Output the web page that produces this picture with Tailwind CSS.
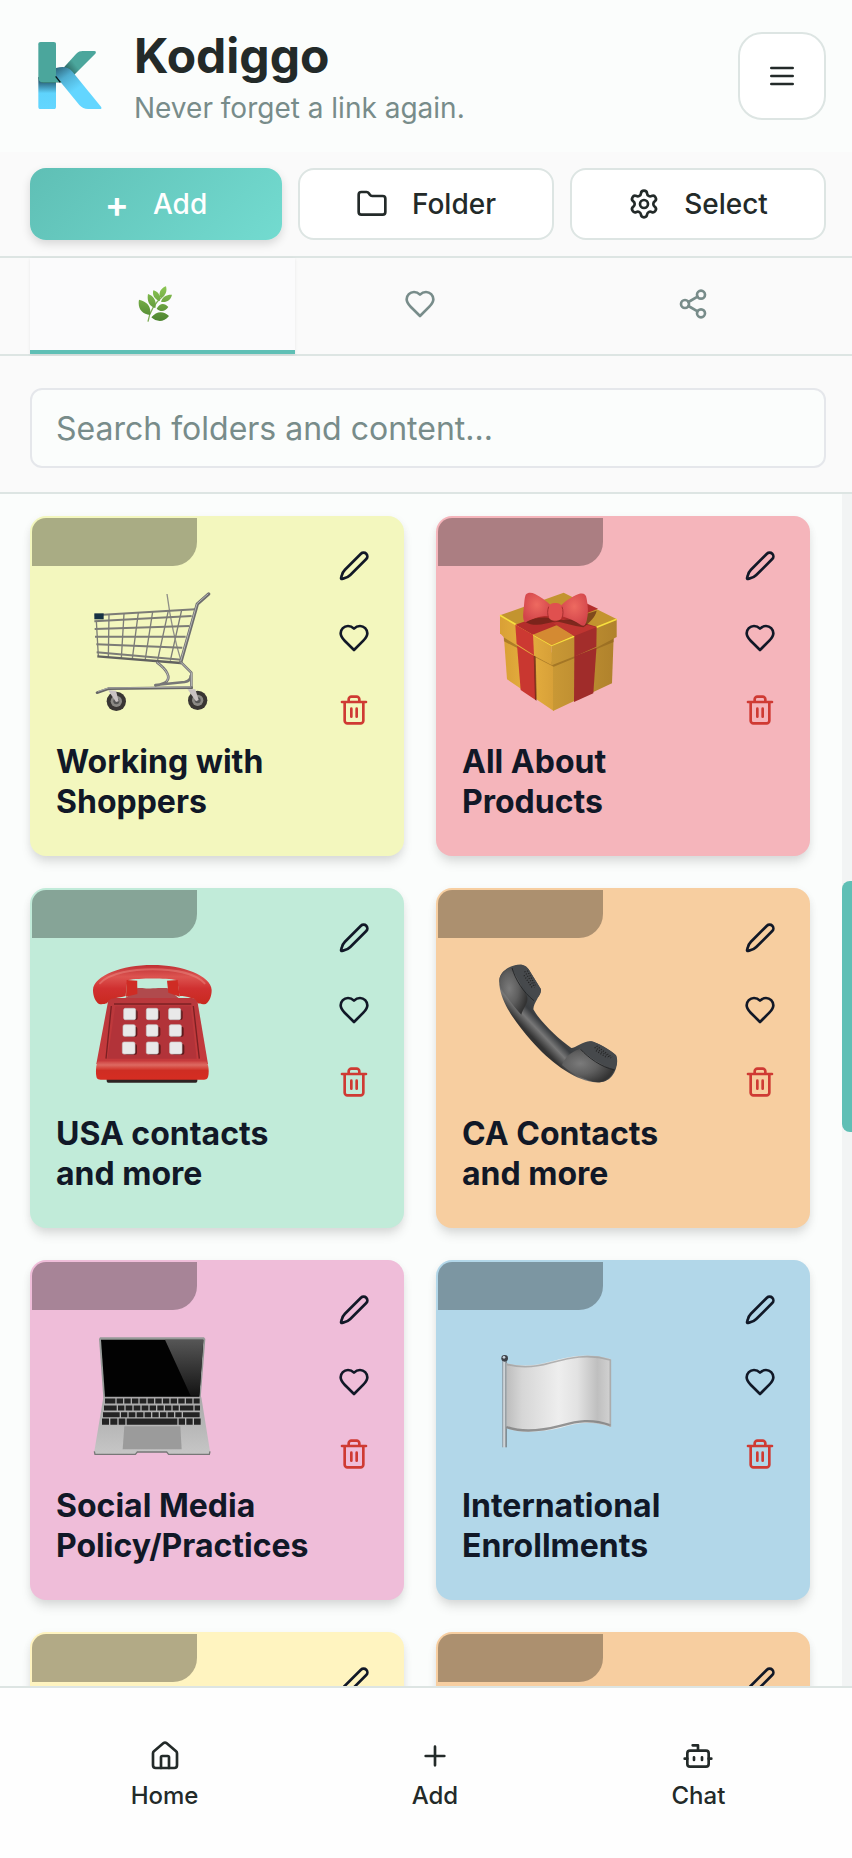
<!DOCTYPE html>
<html lang="en">
<head>
  <meta charset="UTF-8" />
  <meta name="viewport" content="width=device-width, initial-scale=1.0" />
  <title>Kodiggo</title>
  <script src="https://cdn.jsdelivr.net/npm/@tailwindcss/browser@4"></script>
</head>
<body class="flex h-screen flex-col overflow-hidden bg-[#fbfdfc] font-['Inter',sans-serif] text-[#232a29]">

  <!-- Icon sprite -->
  <svg class="absolute size-0" aria-hidden="true">
    <defs>
      <linearGradient id="redTop" x1="0" y1="0" x2="0" y2="1"><stop offset="0" stop-color="#c03034" /><stop offset=".3" stop-color="#dc5450" /><stop offset=".6" stop-color="#d03030" /><stop offset="1" stop-color="#c9291f" /></linearGradient>
      <linearGradient id="redBody" x1="0" y1="0" x2="0" y2="1"><stop offset="0" stop-color="#b9383c" /><stop offset="1" stop-color="#c63a3c" /></linearGradient>
      <linearGradient id="redBase" x1="0" y1="0" x2="0" y2="1"><stop offset="0" stop-color="#cf4644" /><stop offset=".2" stop-color="#dd6a62" /><stop offset=".5" stop-color="#cf2d23" /><stop offset="1" stop-color="#d62d22" /></linearGradient>
      <linearGradient id="tube" gradientUnits="userSpaceOnUse" x1="290" y1="545" x2="400" y2="440"><stop offset="0" stop-color="#2c2c2c" /><stop offset=".42" stop-color="#333" /><stop offset=".6" stop-color="#777" /><stop offset=".75" stop-color="#3a3d40" /><stop offset="1" stop-color="#45494c" /></linearGradient>
      <radialGradient id="ear" cx=".35" cy=".45" r=".65"><stop offset="0" stop-color="#7b7b7b" /><stop offset=".5" stop-color="#5f5f5f" /><stop offset="1" stop-color="#333" /></radialGradient>
      <linearGradient id="cloth" x1="0" y1="0" x2="1" y2="0"><stop offset="0" stop-color="#bdbdbd" /><stop offset=".15" stop-color="#d6d6d6" /><stop offset=".5" stop-color="#eeeeee" /><stop offset=".68" stop-color="#e2e2e2" /><stop offset=".87" stop-color="#bfbfbf" /><stop offset="1" stop-color="#d2d2d2" /></linearGradient>
      <linearGradient id="pole" x1="0" y1="0" x2="1" y2="0"><stop offset="0" stop-color="#7c858c" /><stop offset=".4" stop-color="#e4eaee" /><stop offset="1" stop-color="#5c6368" /></linearGradient>
      <linearGradient id="glare" x1="0" y1="0" x2="0" y2="1"><stop offset="0" stop-color="#565656" /><stop offset="1" stop-color="#141414" /></linearGradient>
      <linearGradient id="palm" x1="0" y1="0" x2="0" y2="1"><stop offset="0" stop-color="#a9a9a9" /><stop offset="1" stop-color="#c6c6c6" /></linearGradient>
      <linearGradient id="gold" x1="0" y1="0" x2="1" y2="0"><stop offset="0" stop-color="#d9a035" /><stop offset=".5" stop-color="#e6af3f" /><stop offset="1" stop-color="#d7a038" /></linearGradient>
      <linearGradient id="goldDark" x1="0" y1="0" x2="1" y2="0"><stop offset="0" stop-color="#c99835" /><stop offset="1" stop-color="#b0822c" /></linearGradient>
      <radialGradient id="bow" cx=".5" cy=".4" r=".6"><stop offset="0" stop-color="#ee6a60" /><stop offset="1" stop-color="#d2444a" /></radialGradient>
      <linearGradient id="leaf" x1="0" y1="0" x2="0" y2="1"><stop offset="0" stop-color="#8cc653" /><stop offset="1" stop-color="#4e8431" /></linearGradient>
      <linearGradient id="stem" x1="0" y1="0" x2="0" y2="1"><stop offset="0" stop-color="#173b4d" /><stop offset=".5" stop-color="#5fd3fc" /><stop offset="1" stop-color="#63d6ff" /></linearGradient>
      <linearGradient id="leg" gradientUnits="userSpaceOnUse" x1="176" y1="196" x2="226" y2="270"><stop offset="0" stop-color="#2b6277" /><stop offset=".45" stop-color="#4fadd0" /><stop offset="1" stop-color="#63d6ff" /></linearGradient>
      <linearGradient id="arm" gradientUnits="userSpaceOnUse" x1="246" y1="186" x2="206" y2="216"><stop offset=".4" stop-color="#4ba69c" /><stop offset="1" stop-color="#2d6b66" /></linearGradient>
    </defs>

    <symbol id="i-menu" viewBox="0 0 24 24"><path d="M4 6h16M4 12h16M4 18h16" /></symbol>
    <symbol id="i-folder" viewBox="0 0 24 24"><path d="M20 20a2 2 0 0 0 2-2V8a2 2 0 0 0-2-2h-7.900a2 2 0 0 1-1.690-.900L9.600 3.900A2 2 0 0 0 7.930 3H4a2 2 0 0 0-2 2v13a2 2 0 0 0 2 2Z" /></symbol>
    <symbol id="i-settings" viewBox="0 0 24 24"><path d="M9.671 4.136a2.340 2.340 0 0 1 4.659 0 2.340 2.340 0 0 0 3.319 1.915 2.340 2.340 0 0 1 2.330 4.033 2.340 2.340 0 0 0 0 3.831 2.340 2.340 0 0 1-2.330 4.033 2.340 2.340 0 0 0-3.319 1.915 2.340 2.340 0 0 1-4.659 0 2.340 2.340 0 0 0-3.320-1.915 2.340 2.340 0 0 1-2.330-4.033 2.340 2.340 0 0 0 0-3.831A2.340 2.340 0 0 1 6.350 6.051a2.340 2.340 0 0 0 3.319-1.915" /><circle cx="12" cy="12" r="3" /></symbol>
    <symbol id="i-heart" viewBox="0 0 24 24"><path d="M19 14c1.490-1.460 3-3.210 3-5.500A5.500 5.500 0 0 0 16.500 3c-1.760 0-3 .5-4.500 2-1.500-1.500-2.740-2-4.500-2A5.500 5.500 0 0 0 2 8.500c0 2.300 1.500 4.050 3 5.500l7 7Z" /></symbol>
    <symbol id="i-share" viewBox="0 0 24 24"><circle cx="18" cy="5" r="3" /><circle cx="6" cy="12" r="3" /><circle cx="18" cy="19" r="3" /><path d="m8.590 13.510 6.830 3.980M15.410 6.510l-6.820 3.980" /></symbol>
    <symbol id="i-pen" viewBox="0 0 24 24"><path d="M21.200 6.800a2.800 2.800 0 0 0-4-4L5.200 14.800c-1.300 1.300-2.200 3-2.500 4.800L2.300 21c-.1.500.2.800.7.700l1.400-.4c1.800-.3 3.500-1.200 4.800-2.500z" /></symbol>
    <symbol id="i-trash" viewBox="0 0 24 24"><path d="M3 6h18M19 6v14c0 1-1 2-2 2H7c-1 0-2-1-2-2V6M8 6V4c0-1 1-2 2-2h4c1 0 2 1 2 2v2M10 11v6M14 11v6" /></symbol>
    <symbol id="i-home" viewBox="0 0 24 24"><path d="M15 21v-8a1 1 0 0 0-1-1h-4a1 1 0 0 0-1 1v8" /><path d="M3 10a2 2 0 0 1 .709-1.528l7-5.999a2 2 0 0 1 2.582 0l7 5.999A2 2 0 0 1 21 10v9a2 2 0 0 1-2 2H5a2 2 0 0 1-2-2z" /></symbol>
    <symbol id="i-plus" viewBox="0 0 24 24"><path d="M5 12h14M12 5v14" /></symbol>
    <symbol id="i-bot" viewBox="0 0 24 24"><path d="M12 8V4H8" /><rect width="16" height="12" x="4" y="8" rx="2" /><path d="M2 14h2M20 14h2M15 13v2M9 13v2" /></symbol>

    <symbol id="a-cart" viewBox="216 276 360 360">
      <g fill="none" stroke="#7d7d78" stroke-width="4">
        <path d="M229 362l6 106M267 344l-2 128M312 341l-8 134M355 338l-18 138M398 335l-22 142M445 332l-32 148M485 330l-34 152" />
        <path d="M441 282c8 60 20 130 42 200" stroke="#8f8f88" />
      </g>
      <g fill="none" stroke="#7c7c77" stroke-width="6">
        <path d="M224 346l302-18M223 364l292-16M224 387l284-9M225 410h272M229 433l258 10M230 457l254 22" />
      </g>
      <path d="M232 469l250 20" fill="none" stroke="#626260" stroke-width="7" />
      <path d="M566 282l-34 30-50 176" fill="none" stroke="#6d6d6d" stroke-width="10" stroke-linecap="round" stroke-linejoin="round" />
      <path d="M564 282l-33 29-49 172" fill="none" stroke="#b5b5b5" stroke-width="3" stroke-linecap="round" />
      <g fill="none" stroke-linecap="round" stroke-linejoin="round">
        <path d="M412 488c30 22 40 44 28 56-6 8-22 10-34 12M484 488l30 30v46M512 528c0 12-6 16-18 18l-88 9" stroke="#777" stroke-width="8" />
        <path d="M412 488c30 22 40 44 28 56M484 488l30 30v42" stroke="#bcbcbc" stroke-width="3" />
        <path d="M231 578l34-12 250-3" stroke="#666" stroke-width="8" />
        <path d="M235 574l30-10 248-3" stroke="#aaa" stroke-width="3" />
      </g>
      <path d="M223 340h28v18h-28z" fill="#173244" />
      <circle cx="289" cy="604" r="29" fill="#393634" /><circle cx="289" cy="604" r="17" fill="#8b8985" /><circle cx="289" cy="604" r="9" fill="#555" />
      <circle cx="533" cy="601" r="29" fill="#393634" /><circle cx="533" cy="601" r="17" fill="#8b8985" /><circle cx="533" cy="601" r="9" fill="#555" />
      <path d="M264 570l24 2 8 32-8 2zM502 567l24 1 10 32-8 4z" fill="#c9c2c2" />
    </symbol>

    <symbol id="a-gift" viewBox="234 276 360 360">
      <path d="M251 400l150 60v173L261 538z" fill="url(#gold)" />
      <path d="M399 460l182-50-5 140-177 83z" fill="url(#goldDark)" />
      <path d="M251 408l150 80v12l-149-76zM401 488l180-76v14l-180 74z" fill="#8e621c" opacity=".6" />
      <path d="M463 466l67-32-10 146-58 26z" fill="#a02c2a" />
      <path d="M289 410l53 40 6 151-46-31z" fill="#c93730" />
      <path d="M341 460l6 4 3 138-5-3z" fill="#5f1f12" opacity=".7" />
      <path d="M240 346l191-68 160 80-196 78z" fill="#c3942f" />
      <path d="M240 346l155 90v59l-64-34-78-48-13-13z" fill="url(#gold)" />
      <path d="M395 436l195-78v53l-61 32-134 53z" fill="url(#goldDark)" />
      <path d="M240 346l155 90 195-78" fill="none" stroke="#f7df3e" stroke-width="5" stroke-linejoin="round" />
      <path d="M339 404l60-32 65 34-69 30z" fill="#d48a32" />
      <path d="M286 374l200-70 48 22-196 78z" fill="#b42d2b" />
      <path d="M286 374l53 30 3 62-52-34z" fill="#cc3932" />
      <path d="M400 366l44-12 86 26-1 60-66 30v-62z" fill="#a32d2b" />
      <path d="M400 370l30-12 99 24-66 26z" fill="#bf3531" />
      <path d="M316 366c30-14 56-16 90-10 26 8 60 4 84-12l40-12c-4 20-22 36-40 50-30-4-60-14-84-18-30 8-64 18-90 2z" fill="#5c2013" opacity=".65" />
      <path d="M317 284c8-8 18-6 28-2 16 8 32 20 46 32l-2 34c-24-2-52 6-72 19-10-4-8-24-6-40 2-18 2-34 6-43z" fill="url(#bow)" />
      <path d="M422 318c12-14 34-28 54-36 14-4 22 0 24 14 4 22 6 44 0 66-4 14-8 18-16 14-18-14-40-22-60-28z" fill="url(#bow)" />
      <rect x="384" y="309" width="44" height="53" rx="18" fill="#e0504f" />
      <path d="M386 320c-4 12-4 22 0 34M426 320c4 12 4 22 0 34" fill="none" stroke="#a9302f" stroke-width="3" />
    </symbol>

    <symbol id="a-phone" viewBox="216 282 360 360">
      <rect x="260" y="610" width="272" height="28" rx="5" fill="#2c2222" />
      <path d="M310 388l18-12c8-12 14-20 26-22h86c14 4 20 12 26 22l14 12z" fill="#b04a4d" />
      <path d="M265 390c2-6 8-6 14-6h236c8 0 14 2 17 8l32 190H229z" fill="url(#redBody)" />
      <path d="M282 402h232M274 408l-16 158M520 408l18 158" fill="none" stroke="#7c2023" stroke-width="4" />
      <path d="M286 409h226l18 157H262z" fill="#b23339" />
      <path d="M235 574h322c6 4 9 16 9 30 0 20-4 25-14 25H242c-12 0-14-5-14-25 0-14 2-26 7-30z" fill="url(#redBase)" />
      <path d="M237 402c-12-8-18-24-18-42 2-44 88-75 178-75s176 31 178 75c0 18-6 34-18 42-8 2-18 0-24-2-4-10-8-15-20-16-12-4-22-6-34-6-4-20-4-40-10-48-30-6-112-6-144 0-6 8-6 34-8 48-16 4-28 6-42 8-6 2-10 6-14 14-6 2-16 4-24 2z" fill="url(#redTop)" />
      <path d="M320 330l32 2v40l-34 8zM441 332l32-2 6 50-34-12z" fill="#cf2c24" />
      <path d="M353 332h86v17c-8 7-76 9-86 1z" fill="#c1ebd9" />
      <path d="M240 340c30-32 100-42 158-42s126 10 156 42" fill="none" stroke="#f09a92" stroke-width="6" stroke-linecap="round" opacity=".4" />
      <g fill="#5f1a1c">
        <rect x="318" y="420" width="35" height="30" rx="6" /><rect x="385" y="420" width="35" height="30" rx="6" /><rect x="453" y="420" width="35" height="30" rx="6" />
        <rect x="317" y="470" width="35" height="30" rx="6" /><rect x="385" y="470" width="36" height="30" rx="6" /><rect x="455" y="470" width="36" height="30" rx="6" />
        <rect x="315" y="522" width="36" height="32" rx="6" /><rect x="385" y="522" width="37" height="32" rx="6" /><rect x="457" y="522" width="36" height="32" rx="6" />
      </g>
      <g fill="#e9e9e9" stroke="#c9c9c9" stroke-width="2">
        <rect x="311" y="415" width="36" height="34" rx="5" /><rect x="379" y="415" width="35" height="34" rx="5" /><rect x="446" y="415" width="36" height="34" rx="5" />
        <rect x="309" y="464" width="37" height="35" rx="5" /><rect x="379" y="464" width="35" height="35" rx="5" /><rect x="448" y="464" width="36" height="35" rx="5" />
        <rect x="307" y="516" width="38" height="36" rx="5" /><rect x="379" y="516" width="36" height="36" rx="5" /><rect x="449" y="516" width="37" height="36" rx="5" />
      </g>
    </symbol>

    <symbol id="a-receiver" viewBox="234 282 360 360">
      <path d="M240 320c8-22 40-38 66-36 10 2 16 8 20 14l36 58c4 12-6 20-10 30-6 12-12 20-12 32 20 36 74 88 114 116 12 0 40-22 58-20 14 2 60 26 76 42 8 16 2 44-12 62-14 18-36 22-58 18-60-10-130-62-184-124-46-52-90-112-96-168 0-10 0-18 2-24z" fill="url(#tube)" />
      <path d="M240 320c8-14 20-24 34-28l46 84c10 20-12 38-16 58-26-30-58-66-66-100 0-6 0-10 2-14z" fill="url(#ear)" />
      <path d="M484 535c20 14 66 52 100 62-12 30-32 42-62 38-40-8-76-32-96-50 10-30 40-44 58-50z" fill="url(#ear)" />
      <path d="M276 292c8-6 22-8 32-6 8 2 14 6 18 12l36 58c2 8-2 18-8 26-24-4-60-48-78-90zM482 538c4-12 20-24 32-24 14 2 60 26 74 42 4 12 4 28-4 42-36-8-76-36-102-60z" fill="#46494c" />
      <path d="M276 294c10 34 34 74 66 98M482 538c22 24 62 54 102 62" fill="none" stroke="#26282a" stroke-width="3" />
      <path d="M314 304l30 48M322 302l24 44M312 316l24 36M524 532l48 32M530 528l46 34M528 542l34 22" fill="none" stroke="#232323" stroke-width="4" stroke-dasharray="3 5" />
    </symbol>

    <symbol id="a-laptop" viewBox="216 288 360 360">
      <path d="M240 292h312l4 5-14 176H250l-13-176z" fill="#979a98" />
      <path d="M243 299h307l-12 171H255z" fill="#020202" />
      <path d="M435 299h115l-12 168h-26z" fill="url(#glare)" />
      <path d="M250 472h294l26 162c0 6-2 10-8 10H446l-6-7h-88l-6 7H230c-6 0-8-4-7-10z" fill="url(#palm)" />
      <path d="M223 634l2 9h121l6-7h88l6 7h122l2-9" fill="none" stroke="#777" stroke-width="4" />
      <g fill="none" stroke="#232323" stroke-width="15">
        <path d="M255 483h284" stroke-dasharray="31 4 19 4 19 4 19 4 20 4 19 4 19 4 19 4 19 4 19 4 19 4 18 4" />
        <path d="M252 504h288" stroke-dasharray="38 4 19 4 20 4 20 4 20 4 19 4 19 4 19 4 18 4 40 4" />
        <path d="M249 524h294" stroke-dasharray="50 4 19 4 20 4 20 4 19 4 19 4 19 4 19 4 19 4 50 4" />
      </g>
      <path d="M246 545h300" fill="none" stroke="#232323" stroke-width="19" stroke-dasharray="21 4 21 4 20 4 152 4 19 4 19 4 20 4" />
      <path d="M313 559h168l4 69H308z" fill="#9b9b9b" />
    </symbol>

    <symbol id="a-flag" viewBox="234 288 360 360">
      <rect x="247" y="362" width="13" height="260" fill="url(#pole)" />
      <circle cx="254" cy="355" r="10" fill="#3d4249" /><circle cx="252" cy="352" r="4" fill="#c9d4de" />
      <path d="M259 369c44 12 88 8 130-4 54-14 110-30 184-8v204c-60-20-100-12-150 2-60 14-120 18-164 2z" fill="url(#cloth)" />
      <path d="M259 561c44 16 104 12 164-4 50-14 90-22 149-1" fill="none" stroke="#7d7d7d" stroke-width="7" opacity=".8" />
      <path d="M260 373c44 12 88 8 130-4 54-14 110-30 181-9v200" fill="none" stroke="#a2a2a2" stroke-width="5" opacity=".8" />
    </symbol>
  </svg>

  <!-- Header -->
  <header class="flex items-center gap-6 py-6 pr-[26px] pl-[30px]">
    <svg class="size-20 shrink-0" viewBox="90 108 240 240" role="img" aria-label="Kodiggo logo">
      <path d="M115 232h53v88c0 5-2 7-6 7h-41c-4 0-6-2-6-7z" fill="url(#stem)" />
      <path d="M115 232h53v17h-40c-7-3-11-9-13-17zM168 225l20 22h-22z" fill="#06141a" />
      <path d="M122 126h39c5 0 7 2 7 7v115h-36c-11 0-17-6-17-15V133c0-5 2-7 7-7z" fill="#4ba69c" />
      <path d="M190 204l38-42c7-7 13-9 20-9h35c5 0 6 4 3 8l-66 66z" fill="url(#arm)" />
      <path d="M168 204c24-6 38-2 50 12l85 104c3 4 1 7-3 7h-36c-11 0-18-4-26-12l-62-76-8-10z" fill="url(#leg)" />
      <path d="M166 228l20 19h-20z" fill="#4ba69c" />
      <path d="M167 229l14 18" stroke="#06141a" stroke-width="4" />
    </svg>
    <div class="min-w-0 flex-1">
      <h1 class="text-5xl leading-16 font-bold">Kodiggo</h1>
      <p class="text-[28px] leading-10 text-[#788c8a]">Never forget a link again.</p>
    </div>
    <button type="button" aria-label="Menu" class="flex size-22 shrink-0 items-center justify-center rounded-3xl border-2 border-[#dde5e3] bg-white">
      <svg class="size-8 fill-none stroke-current stroke-2 [stroke-linecap:round]"><use href="#i-menu" /></svg>
    </button>
  </header>

  <!-- Actions -->
  <div class="flex gap-4 border-b-2 border-[#dde5e3] bg-[#fafafa] py-4 pr-[26px] pl-[30px] text-[28px] font-medium">
    <button type="button" class="flex h-18 flex-1 items-center justify-center gap-6 rounded-2xl bg-[linear-gradient(135deg,#5fbfb5,#73dbd0)] text-white shadow-[0_4px_10px_rgba(0,0,0,0.14)]">
      <span class="text-4xl font-semibold">+</span>
      Add
    </button>
    <button type="button" class="flex h-18 flex-1 items-center justify-center gap-6 rounded-2xl border-2 border-[#dde5e3] bg-white">
      <svg class="size-8 fill-none stroke-current stroke-2 [stroke-linecap:round] [stroke-linejoin:round]"><use href="#i-folder" /></svg>
      Folder
    </button>
    <button type="button" class="flex h-18 flex-1 items-center justify-center gap-6 rounded-2xl border-2 border-[#dde5e3] bg-white">
      <svg class="size-8 fill-none stroke-current stroke-2 [stroke-linecap:round] [stroke-linejoin:round]"><use href="#i-settings" /></svg>
      Select
    </button>
  </div>

  <!-- Tabs -->
  <div role="tablist" class="grid grid-cols-3 border-b-2 border-[#dde5e3] bg-[#fafafa] pr-[26px] pl-[30px] text-[#788c8a]">
    <button type="button" role="tab" aria-selected="true" aria-label="Folders" class="flex h-24 items-center justify-center border-b-4 border-[#5fbfb5] bg-[#fbfbfc] shadow-[0_1px_3px_rgba(0,0,0,0.08)]">
      <svg class="mr-4 size-9" viewBox="411 104 108 108">
        <path d="M444 211c4-30 20-56 48-80" fill="none" stroke="#7fae56" stroke-width="4" />
        <g fill="url(#leaf)">
          <path d="M417 145c26 6 38 22 33 46-24-2-38-20-33-46zM444 128c18 6 27 22 22 42-18-4-26-22-22-42zM460 117c16 4 23 18 19 32-15-4-23-17-19-32zM498 105c5 18-4 32-18 34-5-16 4-29 18-34zM516 130c-4 19-18 24-33 21 4-14 17-22 33-21zM505 167c-10 15-24 15-35 5 8-16 23-19 35-5zM507 194c-16 20-38 18-53 4 15-20 38-20 53-4z" />
        </g>
      </svg>
    </button>
    <button type="button" role="tab" aria-selected="false" aria-label="Favorites" class="flex h-24 items-center justify-center border-b-4 border-transparent">
      <svg class="mr-4 size-8 fill-none stroke-current stroke-2 [stroke-linecap:round] [stroke-linejoin:round]"><use href="#i-heart" /></svg>
    </button>
    <button type="button" role="tab" aria-selected="false" aria-label="Shared" class="flex h-24 items-center justify-center border-b-4 border-transparent">
      <svg class="size-8 fill-none stroke-current stroke-2 [stroke-linecap:round] [stroke-linejoin:round]"><use href="#i-share" /></svg>
    </button>
  </div>

  <!-- Search -->
  <div class="border-b-2 border-[#dde5e3] bg-[#fafafa] pt-8 pr-[26px] pb-6 pl-[30px]">
    <input type="search" aria-label="Search folders and content" placeholder="Search folders and content..." class="block h-20 w-full rounded-xl border-2 border-[#e5e7eb] bg-[#fbfdfc] px-6 text-[32px] placeholder:text-[#788c8a]" />
  </div>

  <!-- Folder grid -->
  <main class="relative min-h-0 flex-1 overflow-hidden">
    <div id="folders" class="grid grid-cols-2 gap-8 pt-[22px] pr-[42px] pl-[30px]"></div>
    <div class="absolute inset-y-0 right-0 w-[10px] bg-[#f2f4f4]">
      <div class="mt-[387px] h-[251px] rounded-l-lg bg-[#5fbfb5]"></div>
    </div>
  </main>

  <!-- Bottom navigation -->
  <nav class="flex justify-around border-t-2 border-[#dde5e3] bg-[#fefefe] pt-[52px] pr-5 pb-[46px] pl-6 text-2xl leading-8 font-medium">
    <a href="#home" class="flex flex-col items-center gap-2">
      <svg class="size-8 fill-none stroke-current stroke-2 [stroke-linecap:round] [stroke-linejoin:round]"><use href="#i-home" /></svg>
      Home
    </a>
    <a href="#add" class="flex flex-col items-center gap-2">
      <svg class="size-8 fill-none stroke-current stroke-2 [stroke-linecap:round] [stroke-linejoin:round]"><use href="#i-plus" /></svg>
      Add
    </a>
    <a href="#chat" class="flex flex-col items-center gap-2">
      <svg class="size-8 fill-none stroke-current stroke-2 [stroke-linecap:round] [stroke-linejoin:round]"><use href="#i-bot" /></svg>
      Chat
    </a>
  </nav>

  <script>
    const folders = [
      { title: "Working with Shoppers", art: "a-cart", bg: "bg-[#f3f7be]" },
      { title: "All About Products", art: "a-gift", bg: "bg-[#f5b5bb]" },
      { title: "USA contacts and more", art: "a-phone", bg: "bg-[#c1ebd9]" },
      { title: "CA Contacts and more", art: "a-receiver", bg: "bg-[#f7cea0]" },
      { title: "Social Media Policy/Practices", art: "a-laptop", bg: "bg-[#efbdd9]" },
      { title: "International Enrollments", art: "a-flag", bg: "bg-[#b2d7e9]" },
      { title: "", art: "", bg: "bg-[#fff4c0]" },
      { title: "", art: "", bg: "bg-[#f7cea0]" }
    ];

    const action = (icon, label, color) => `
      <button type="button" aria-label="${label}" class="flex size-16 items-center justify-center ${color}">
        <svg class="size-8 fill-none stroke-current stroke-2 [stroke-linecap:round] [stroke-linejoin:round]"><use href="#${icon}" /></svg>
      </button>`;

    document.getElementById("folders").innerHTML = folders.map(f => `
      <article class="relative flex h-[340px] justify-between rounded-2xl pl-[26px] pr-[18px] shadow-[0_8px_12px_-2px_rgba(0,0,0,0.12),0_2px_8px_rgba(0,0,0,0.05)] ${f.bg}">
        <div class="absolute top-[2px] left-[2px] h-12 w-[165px] rounded-tl-[14px] rounded-br-3xl bg-black/30"></div>
        <div class="min-w-0 flex-1 pt-19">
          <svg class="mb-[30px] ml-9 size-30"><use href="#${f.art}" /></svg>
          <h2 class="max-w-64 text-[32px] leading-10 font-bold text-[#111827]">${f.title}</h2>
        </div>
        <div class="flex flex-col gap-2 pt-[18px]">
          ${action("i-pen", "Edit", "text-[#111827]")}
          ${action("i-heart", "Favorite", "text-[#111827]")}
          ${action("i-trash", "Delete", "text-[#cf3a33]")}
        </div>
      </article>`).join("");
  </script>
</body>
</html>
